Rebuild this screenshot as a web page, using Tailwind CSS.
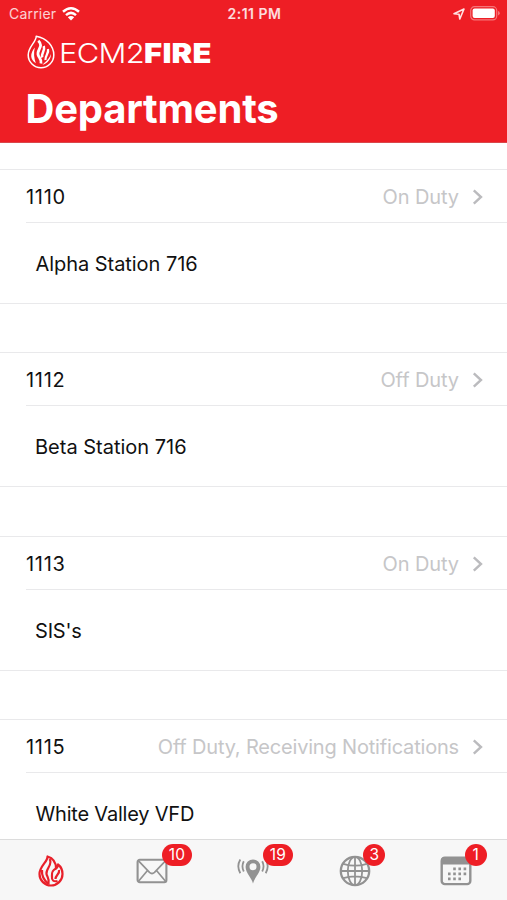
<!DOCTYPE html>
<html lang="en">
<head>
  <meta charset="UTF-8" />
  <meta name="viewport" content="width=device-width, initial-scale=1.0"/>
  <title>ECM2FIRE - Departments</title>
  <script src="https://cdn.jsdelivr.net/npm/@tailwindcss/browser@4"></script>
</head>
<body class="h-screen flex flex-col overflow-hidden bg-white text-[#111] font-['Inter','Liberation_Sans',sans-serif]">

  <!-- Header -->
  <header class="h-[143px] shrink-0 bg-[#ee1e25] border-b border-[#d9474b] text-white">

    <!-- Status bar -->
    <div class="h-7 grid grid-cols-3 items-center pl-[9px] pr-[7px] text-[14px]">
      <div class="flex items-center gap-[6px] -mt-px text-white/80">
        <span class="tracking-[0.2px]">Carrier</span>
        <svg class="w-[18px] h-[14px]" viewBox="0 0 18 14" fill="none" stroke="#fff" stroke-width="2.5">
          <path d="M1 4.8Q9-2.2 17 4.8" />
          <path d="M4 8.1Q9 3.7 14 8.1" />
          <path d="M9 13.6L5.8 10.2Q9 7.6 12.2 10.2Z" fill="#fff" stroke="none" />
        </svg>
      </div>
      <div class="-mt-px text-center text-[14px] font-semibold tracking-[0.5px] text-white/85">2:11 PM</div>
      <div class="flex items-center justify-end gap-[5px] -mt-px">
        <svg class="w-[12px] h-[12px]" viewBox="0 0 12 12" fill="none" stroke="#ffe3e4" stroke-width="1.6" stroke-linejoin="round">
          <path d="M1 5.8L11 1L6.8 11L6 6.2Z" />
        </svg>
        <svg class="w-[30px] h-[15px]" viewBox="0 0 30 15">
          <rect x="0.7" y="0.7" width="26" height="13.2" rx="3.8" fill="none" stroke="#f57579" stroke-width="1.2" />
          <rect x="2.6" y="2.5" width="22.2" height="9.6" rx="2" fill="#fff" />
          <path d="M28 5.1Q29.8 5.7 29.8 7.3T28 9.5Z" fill="#f57579" />
        </svg>
      </div>
    </div>

    <!-- Logo -->
    <div class="h-[51px] flex items-center pl-[27px]">
      <svg class="w-[28px] h-[34px] -mt-[3px]" viewBox="0 0 28 34" fill="none" stroke="#fff">
        <path d="M9.2 1.2C9.8 6.5 1.2 11.5 1.2 20A12.8 12.8 0 0 0 26.8 20C26.8 11.5 20 3 9.2 1.2Z" stroke-width="1.5" stroke-linejoin="round" />
        <path d="M11.3 5.8C17.5 11.5 9 15 11.3 20.5C12.3 23 14.6 24 14 28.5" stroke-width="2.8" />
        <path d="M7.8 12.5C2.8 18.5 3 24.5 8.8 28.3C7 23 6.5 18 7.8 12.5Z" fill="#fff" stroke="none" />
        <path d="M16.8 11C18.6 16 13.6 18.5 15.2 22.5" stroke-width="2.5" />
        <path d="M21 14C22.3 18.5 17.8 20.5 18.5 25" stroke-width="2.3" />
        <path d="M24 19C24 24 20.5 28.7 15.5 29.7C18 27.5 21.8 24.5 24 19Z" fill="#fff" stroke="none" />
      </svg>
      <div class="ml-[4px] flex origin-left scale-x-[1.125] text-[27.5px] leading-none">
        <span class="font-light tracking-[-0.6px]">ECM2</span><span class="font-black tracking-[0.2px]">FIRE</span>
      </div>
    </div>

    <h1 class="pl-[25.5px] pt-[5px] text-[40px] leading-[50px] font-bold tracking-[-0.2px]">Departments</h1>
  </header>

  <!-- Departments list -->
  <main class="flex-1 min-h-0 overflow-hidden pt-[26px] text-[20px]">
    <section class="h-[183.4px]">
      <div class="h-[135px] border-y border-[#e9e9eb]">
        <div class="h-[53px] pt-[2px] ml-[26px] pr-[24px] flex items-center justify-between border-b border-[#e9e9eb]">
          <span class="tracking-[0.7px]">1110</span>
          <div class="flex items-center gap-[13px] text-[#c6c6c8]">
            <span class="tracking-[-0.1px]">On Duty</span>
            <svg class="w-[11px] h-[16px]" viewBox="0 0 11 16" fill="none" stroke="#bbbbbe" stroke-width="2.4"><path d="M1.8 1.3L9 8L1.8 14.7" /></svg>
          </div>
        </div>
        <div class="h-[80px] pt-[2px] flex items-center pl-[35.5px] tracking-[-0.05px]">Alpha Station 716</div>
      </div>
    </section>

    <section class="h-[183.4px]">
      <div class="h-[135px] border-y border-[#e9e9eb]">
        <div class="h-[53px] pt-[2px] ml-[26px] pr-[24px] flex items-center justify-between border-b border-[#e9e9eb]">
          <span class="tracking-[0.7px]">1112</span>
          <div class="flex items-center gap-[13px] text-[#c6c6c8]">
            <span class="tracking-[-0.1px]">Off Duty</span>
            <svg class="w-[11px] h-[16px]" viewBox="0 0 11 16" fill="none" stroke="#bbbbbe" stroke-width="2.4"><path d="M1.8 1.3L9 8L1.8 14.7" /></svg>
          </div>
        </div>
        <div class="h-[80px] pt-[2px] flex items-center pl-[35px]">Beta Station 716</div>
      </div>
    </section>

    <section class="h-[183.4px]">
      <div class="h-[135px] border-y border-[#e9e9eb]">
        <div class="h-[53px] pt-[2px] ml-[26px] pr-[24px] flex items-center justify-between border-b border-[#e9e9eb]">
          <span class="tracking-[0.7px]">1113</span>
          <div class="flex items-center gap-[13px] text-[#c6c6c8]">
            <span class="tracking-[-0.1px]">On Duty</span>
            <svg class="w-[11px] h-[16px]" viewBox="0 0 11 16" fill="none" stroke="#bbbbbe" stroke-width="2.4"><path d="M1.8 1.3L9 8L1.8 14.7" /></svg>
          </div>
        </div>
        <div class="h-[80px] pt-[2px] flex items-center pl-[35px] tracking-[-0.2px]">SIS's</div>
      </div>
    </section>

    <section class="h-[183.4px]">
      <div class="h-[135px] border-y border-[#e9e9eb]">
        <div class="h-[53px] pt-[2px] ml-[26px] pr-[24px] flex items-center justify-between border-b border-[#e9e9eb]">
          <span class="tracking-[0.7px]">1115</span>
          <div class="flex items-center gap-[13px] text-[#c6c6c8]">
            <span class="tracking-[-0.18px]">Off Duty, Receiving Notifications</span>
            <svg class="w-[11px] h-[16px]" viewBox="0 0 11 16" fill="none" stroke="#bbbbbe" stroke-width="2.4"><path d="M1.8 1.3L9 8L1.8 14.7" /></svg>
          </div>
        </div>
        <div class="h-[80px] pt-[2px] flex items-center pl-[35.5px] tracking-[-0.2px]">White Valley VFD</div>
      </div>
    </section>
  </main>

  <!-- Tab bar -->
  <nav class="h-[61px] pt-px shrink-0 grid grid-cols-5 items-center bg-[#f7f7f7] border-t border-[#dcdcdc]">
    <a href="#" class="relative flex justify-center">
      <svg class="w-[26px] h-[32px]" viewBox="0 0 26 32" fill="none" stroke="#e8202a" stroke-width="2.2" stroke-linejoin="round">
        <path d="M9.5 1.5C10 6.5 1.5 11 1.5 19A11.5 11.5 0 0 0 24.5 19C24.5 14 22 11 20 9.5C19.8 12 19 13 18 13.5C18 7 14.5 3 9.5 1.5Z" />
        <path d="M11.5 4C15.5 9 7.5 14 8.5 19C9 22 11.5 23 10.5 29" />
        <path d="M18 13.5C13 16 14 19 14 22C13.5 25 15.5 27 19.5 26" />
        <path d="M4 15C3.5 21 5.5 25 10.5 29" />
        <path d="M21 15C22 19 17.5 20 17.5 24" />
      </svg>
    </a>

    <a href="#" class="relative flex justify-center">
      <svg class="w-[32px] h-[26px]" viewBox="0 0 32 26" fill="none" stroke="#929292" stroke-width="2.1" stroke-linejoin="round">
        <rect x="1.6" y="1.8" width="28.8" height="22.4" rx="2.2" />
        <path d="M2.3 2.7L13.5 14.3Q16 16.7 18.5 14.3L29.7 2.7M2.5 23.3L11.5 12.5M29.5 23.3L20.5 12.5" stroke-width="1.7" />
      </svg>
      <span class="absolute left-[60.5px] top-[-14px] w-[30px] h-[22px] rounded-full bg-[#ee1e25] text-white text-[15.5px] leading-[22px] text-center">10</span>
    </a>

    <a href="#" class="relative flex justify-center">
      <svg class="w-[32px] h-[26px]" viewBox="0 0 32 26" fill="none" stroke="#929292" stroke-width="1.8">
        <path fill="#929292" fill-rule="evenodd" stroke="none" d="M16 25.5C14.5 19.5 8.6 15 8.6 8.8A7.4 7.4 0 0 1 23.4 8.8C23.4 15 17.5 19.5 16 25.5ZM16 5.2A3.5 3.5 0 1 0 16 12.2A3.5 3.5 0 1 0 16 5.2Z" />
        <path d="M6.8 3.3Q4.1 8.3 6.8 13.5M3.3 1.5Q-0.7 8.3 3.3 15.3M25.2 3.3Q27.9 8.3 25.2 13.5M28.7 1.5Q32.7 8.3 28.7 15.3" />
      </svg>
      <span class="absolute left-[60px] top-[-14px] w-[30px] h-[22px] rounded-full bg-[#ee1e25] text-white text-[15.5px] leading-[22px] text-center">19</span>
    </a>

    <a href="#" class="relative flex justify-center">
      <svg class="w-[32px] h-[32px]" viewBox="0 0 32 32" fill="none" stroke="#929292" stroke-width="1.8">
        <circle cx="16" cy="16" r="14.2" stroke-width="2.3" />
        <ellipse cx="16" cy="16" rx="7.2" ry="14.2" />
        <path d="M16 2V30M2 16H30M4.2 8.8Q16 12.6 27.8 8.8M4.2 23.2Q16 19.4 27.8 23.2" />
      </svg>
      <span class="absolute left-[59px] top-[-11px] w-[22px] h-[22px] rounded-full bg-[#ee1e25] text-white text-[15.5px] leading-[22px] text-center">3</span>
    </a>

    <a href="#" class="relative flex justify-center">
      <svg class="w-[32px] h-[30px]" viewBox="0 0 32 30">
        <rect x="1.7" y="1.7" width="28.6" height="26.4" rx="3.2" fill="none" stroke="#929292" stroke-width="2.4" />
        <path d="M1 8.5V4.5Q1 1 4.5 1H27.5Q31 1 31 4.5V8.5Z" fill="#929292" />
        <path d="M13.2 12.9H26.6M8 17.9H26.6M8 22.9H21" fill="none" stroke="#929292" stroke-width="2.6" stroke-dasharray="2.6 2.6" />
      </svg>
      <span class="absolute left-[59px] top-[-12px] w-[22px] h-[22px] rounded-full bg-[#ee1e25] text-white text-[15.5px] leading-[22px] text-center">1</span>
    </a>
  </nav>

</body>
</html>
